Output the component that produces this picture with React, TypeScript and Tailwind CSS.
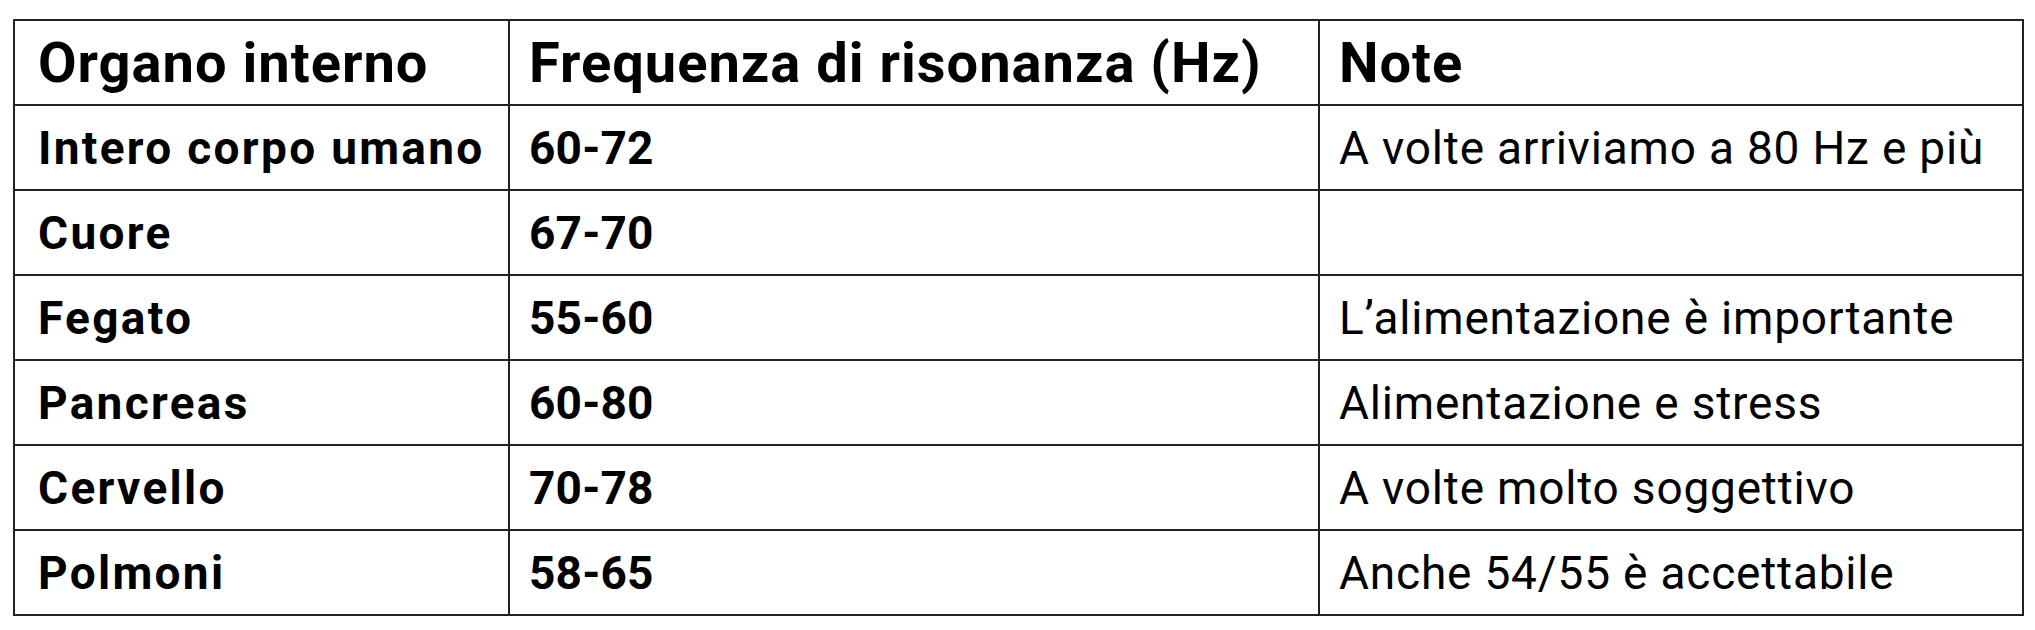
const rows = [
  { organ: 'Intero corpo umano', freq: '60-72', note: 'A volte arriviamo a 80 Hz e più' },
  { organ: 'Cuore', freq: '67-70', note: '' },
  { organ: 'Fegato', freq: '55-60', note: 'L’alimentazione è importante' },
  { organ: 'Pancreas', freq: '60-80', note: 'Alimentazione e stress' },
  { organ: 'Cervello', freq: '70-78', note: 'A volte molto soggettivo' },
  { organ: 'Polmoni', freq: '58-65', note: 'Anche 54/55 è accettabile' },
];

const cell = 'border-2 border-[#222222] align-middle whitespace-nowrap leading-none';
const head = `${cell} text-left font-bold text-[56px] tracking-[1px]`;

export default function App() {
  return (
    <div className="min-h-screen bg-white pl-[13px] pt-[19px] text-black font-['Roboto',sans-serif]">
      <table className="table-fixed border-collapse w-[2009px]">
        <colgroup>
          <col className="w-[495px]" />
          <col className="w-[810px]" />
          <col className="w-[704px]" />
        </colgroup>
        <thead>
          <tr className="h-[85px]">
            <th className={`${head} px-[23px] tracking-[1.3px]`}>Organo interno</th>
            <th className={`${head} px-[19px]`}>Frequenza di risonanza (Hz)</th>
            <th className={`${head} px-[19px]`}>Note</th>
          </tr>
        </thead>
        <tbody>
          {rows.map((r) => (
            <tr key={r.organ} className="h-[85px]">
              <td className={`${cell} px-[23px] font-bold text-[46px] tracking-[2.3px]`}>{r.organ}</td>
              <td className={`${cell} px-[19px] font-bold text-[46px] tracking-[0.2px]`}>{r.freq}</td>
              <td className={`${cell} px-[19px] text-[46px] tracking-[0.8px]`}>{r.note}</td>
            </tr>
          ))}
        </tbody>
      </table>
    </div>
  );
}
